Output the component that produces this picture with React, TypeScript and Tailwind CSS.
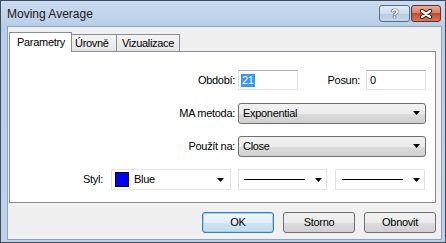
import React from 'react'

function Arrow() {
  return (
    <svg width="7" height="4" viewBox="0 0 7 4" className="shrink-0">
      <path d="M0 0 H7 L3.5 4 Z" fill="#000" />
    </svg>
  )
}

function ComboBox({ text }: { text: string }) {
  return (
    <div className="w-[188px] h-[21px] flex items-center pl-[4px] pr-[5px] rounded-[3px] border border-[#707070] bg-[linear-gradient(180deg,#f2f2f2_0%,#ebebeb_50%,#dddddd_51%,#cfcfcf_100%)]">
      <span className="flex-1">{text}</span>
      <Arrow />
    </div>
  )
}

export default function App() {
  return (
    <div className="w-[446px] h-[243px] flex flex-col border border-[#414d5d] bg-[linear-gradient(180deg,#c9dbf0_0px,#b8cee8_26px,#bdd1ea_100%)] text-[11px] tracking-[-0.3px] text-black font-['Liberation_Sans',Arial,sans-serif]">
      {/* Title bar */}
      <div className="h-[25px] shrink-0 flex items-center pl-[6px] pr-[4px]">
        <span className="text-[12px] tracking-normal text-[#1a1a1a]">Moving Average</span>
        <div className="ml-auto flex gap-[1px]">
          <div className="w-[31px] h-[17px] rounded-[3px] border border-[#5b6c84] bg-[linear-gradient(180deg,#e3edf8_0%,#ccdcee_50%,#b5cbe5_51%,#c4d7ee_100%)] flex items-center justify-center">
            <span className="text-[13px] font-bold leading-none text-white [text-shadow:0_0_1px_#2b3a4f,0_0_1px_#2b3a4f,0_0_1px_#2b3a4f]">?</span>
          </div>
          <div className="w-[30px] h-[17px] rounded-[3px] border border-[#6b2c22] bg-[linear-gradient(180deg,#e9a996_0%,#d8826b_45%,#c44a2f_50%,#d77a5a_100%)] flex items-center justify-center">
            <svg width="14" height="10" viewBox="0 0 14 10">
              <path d="M3 2 L11 8 M11 2 L3 8" stroke="#3a1a14" strokeWidth="4.2" strokeLinecap="round" />
              <path d="M3 2 L11 8 M11 2 L3 8" stroke="#fff" strokeWidth="2.4" strokeLinecap="round" />
            </svg>
          </div>
        </div>
      </div>

      {/* Client area */}
      <div className="flex-1 pl-[6px] pr-[3px] pb-[2px]">
        <div className="h-full border border-[#8ba1bd] bg-[#f0f0f0] pt-[5px] pl-[1px]">
          {/* Tabs */}
          <div className="flex items-end h-[19px] relative z-10">
            <div className="w-[63px] h-[20px] mb-[-1px] bg-white border border-b-0 border-[#898c95] flex items-center pl-[7px]">Parametry</div>
            <div className="w-[45px] h-[17px] border border-l-0 border-b-0 border-[#898c95] bg-[linear-gradient(180deg,#f4f4f4,#e5e5e5)] flex items-center pl-[3px]">Úrovně</div>
            <div className="w-[63px] h-[17px] border border-l-0 border-b-0 border-[#898c95] bg-[linear-gradient(180deg,#f4f4f4,#e5e5e5)] flex items-center pl-[5px]">Vizualizace</div>
          </div>

          {/* Panel */}
          <div className="w-[427px] h-[152px] border border-[#898c95] bg-white pt-[18px] flex flex-col gap-[13px]">
            <div className="flex items-center h-[20px]">
              <div className="w-[228px] text-right pr-[3px]">Období:</div>
              <div className="w-[60px] h-[20px] border border-[#dbdfe6] border-t-[#abadb3] flex items-center pl-[2px]">
                <span className="bg-[#3399ff] text-white px-[1px] leading-[13px]">21</span>
              </div>
              <div className="w-[68px] text-right pr-[6px]">Posun:</div>
              <div className="w-[60px] h-[20px] border border-[#dbdfe6] border-t-[#abadb3] flex items-center pl-[3px]">0</div>
            </div>
            <div className="flex items-center h-[20px]">
              <div className="w-[228px] text-right pr-[3px]">MA metoda:</div>
              <ComboBox text="Exponential" />
            </div>
            <div className="flex items-center h-[20px]">
              <div className="w-[228px] text-right pr-[3px]">Použít na:</div>
              <ComboBox text="Close" />
            </div>
            <div className="flex items-center h-[21px] pl-[73px]">
              <span className="w-[28px]">Styl:</span>
              <div className="w-[120px] h-[21px] border border-[#e3e3e3] flex items-center pl-[3px] pr-[6px]">
                <div className="w-[14px] h-[15px] border border-black bg-[#0000ff]" />
                <span className="flex-1 pl-[5px]">Blue</span>
                <Arrow />
              </div>
              <div className="ml-[7px] w-[89px] h-[21px] border border-[#e3e3e3] flex items-center pl-[5px] pr-[4px]">
                <div className="w-[61px] h-px bg-black" />
                <div className="flex-1" />
                <Arrow />
              </div>
              <div className="ml-[8px] w-[90px] h-[21px] border border-[#e3e3e3] flex items-center pl-[6px] pr-[4px]">
                <div className="w-[61px] h-px bg-black" />
                <div className="flex-1" />
                <Arrow />
              </div>
            </div>
          </div>

          {/* Buttons */}
          <div className="w-[427px] flex justify-end gap-[9px] mt-[9px]">
            <div className="w-[72px] h-[21px] rounded-[3px] border border-[#3c7fb1] bg-[linear-gradient(180deg,#eef6fc_0%,#e2eff9_50%,#cde4f4_51%,#c1dcf1_100%)] shadow-[inset_0_0_0_1px_#9fd0f0] flex items-center justify-center">OK</div>
            <div className="w-[72px] h-[21px] rounded-[3px] border border-[#707070] bg-[linear-gradient(180deg,#f2f2f2_0%,#ebebeb_50%,#dddddd_51%,#cfcfcf_100%)] flex items-center justify-center">Storno</div>
            <div className="w-[72px] h-[21px] rounded-[3px] border border-[#707070] bg-[linear-gradient(180deg,#f2f2f2_0%,#ebebeb_50%,#dddddd_51%,#cfcfcf_100%)] flex items-center justify-center">Obnovit</div>
          </div>
        </div>
      </div>
    </div>
  )
}
